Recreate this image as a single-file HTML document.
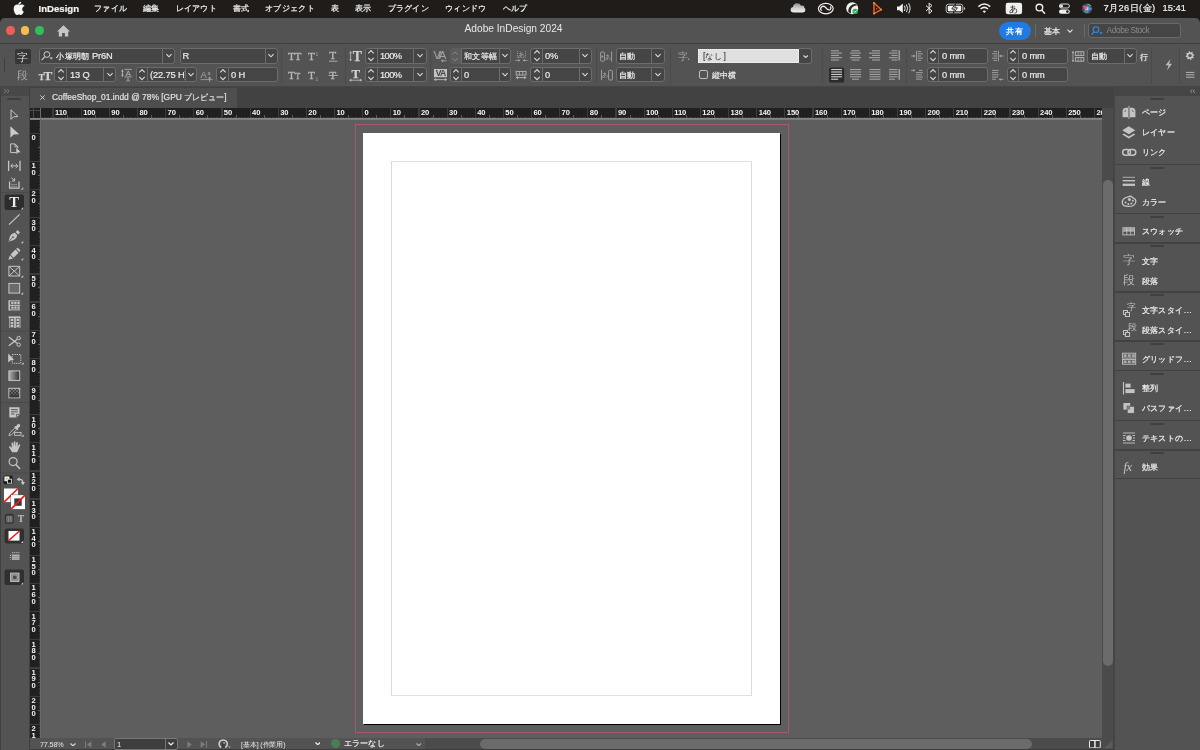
<!DOCTYPE html>
<html lang="ja"><head><meta charset="utf-8"><title>Adobe InDesign 2024</title>
<style>
html,body{margin:0;padding:0}
body{width:1200px;height:750px;overflow:hidden;position:relative;background:#1f1c1a;
 font-family:"Liberation Sans",sans-serif;color:#e6e6e6;font-size:8.4px;line-height:1}
.a,.a *{position:absolute;box-sizing:border-box}
.a svg{overflow:visible}
.mi{top:0;height:17px;line-height:17px;color:#f4f4f4;font-size:8.4px;letter-spacing:.33px;white-space:nowrap;-webkit-text-stroke:0.2px #f4f4f4}
.f{background:#454545;border:1px solid #6c6c6c;border-radius:3px;height:15px;overflow:hidden}
.f .t{top:0;height:13px;line-height:14.6px;font-size:9.3px;letter-spacing:-.15px;color:#ececec;white-space:nowrap;overflow:hidden;-webkit-text-stroke:0.2px #ececec}
.f .d{top:0;width:1px;height:13px;background:#6c6c6c}
.f svg{top:0}
.lb{font-size:8.4px;color:#ececec;white-space:nowrap;line-height:10px;-webkit-text-stroke:0.2px #ececec}
.j{position:static!important;font-size:8.4px;letter-spacing:.25px}
.sep{width:1px;background:#4a4a4a}
.rl{font-size:7.6px;color:#f4f4f4;font-weight:bold;line-height:8px;white-space:nowrap;letter-spacing:-0.1px}
.pl{font-size:8.4px;color:#f0f0f0;white-space:nowrap;line-height:10px;left:26.6px;letter-spacing:.42px;-webkit-text-stroke:0.2px #f0f0f0}
.ps{left:0;width:85px;height:1px;background:#424242}
.pg{left:35px;width:14px;height:2.4px;background:#3f3f3f;border-radius:1px}
</style></head>
<body>
<div id="app" style="position:absolute;left:0;top:0;width:1200px;height:750px;will-change:transform">
<div class="a" style="left:0;top:0;width:1200px;height:18px;background:#1f1c1a">
<svg style="left:14px;top:2px" width="11" height="13" viewBox="0 0 170 200"><path fill="#f5f5f5" d="M150 68c-9 6-23 18-23 42 0 28 24 38 25 38-0 1-4 14-13 27-8 12-17 24-30 24s-17-8-32-8c-15 0-20 8-32 8s-21-11-31-25C3 158-5 130-5 104c0-42 27-64 54-64 14 0 26 9 35 9 8 0 22-10 38-10 6 0 28 1 43 22zM99 28c7-8 11-19 11-30 0-2 0-3-0-4-11 0-24 7-32 16-6 7-12 18-12 30 0 2 0 3 1 4 1 0 2 0 3 0 10 0 22-7 29-16z"/></svg>
<span class="mi" style="left:38.5px;font-weight:bold;font-size:9.6px;letter-spacing:0;">InDesign</span><span class="mi" style="left:94px;">ファイル</span><span class="mi" style="left:143px;">編集</span><span class="mi" style="left:175.5px;">レイアウト</span><span class="mi" style="left:233px;">書式</span><span class="mi" style="left:265px;">オブジェクト</span><span class="mi" style="left:331px;">表</span><span class="mi" style="left:355px;">表示</span><span class="mi" style="left:387.5px;">プラグイン</span><span class="mi" style="left:445px;">ウィンドウ</span><span class="mi" style="left:502.5px;">ヘルプ</span>
<svg class="a" style="left:780px;top:0" width="330" height="18" viewBox="780 0 330 18"><defs><linearGradient id="cl" x1="0" x2="0" y1="0" y2="1"><stop offset="0" stop-color="#8f8f8f"/><stop offset="0.55" stop-color="#cfcfcf"/><stop offset="1" stop-color="#eeeeee"/></linearGradient><radialGradient id="siri" cx="0.5" cy="0.5" r="0.5"><stop offset="0" stop-color="#ffffff"/><stop offset="0.25" stop-color="#7fb4ff"/><stop offset="0.6" stop-color="#5a5a6a"/><stop offset="1" stop-color="#3a3a3a"/></radialGradient></defs><path d="M793.6 12.4 Q790.6 12.4 790.6 9.7 Q790.6 7.4 793 7 Q793.4 3.3 797.2 3.3 Q799.9 3.3 801.1 5.7 Q801.9 5.3 802.7 5.5 Q804.4 5.9 804.4 7.9 Q805.4 8.5 805.4 10 Q805.4 12.4 803 12.4 Z" fill="url(#cl)"/><ellipse cx="825.8" cy="8.6" rx="7.4" ry="5.2" fill="none" stroke="#f0f0f0" stroke-width="1.2"/><path d="M821.6 10.6 Q819.6 8.6 821.8 6.8 Q824 5.4 826 7.8 Q828 10.6 830 9.6 Q831.6 8.4 830.2 6.6" fill="none" stroke="#f0f0f0" stroke-width="1.3"/><circle cx="852.2" cy="8.2" r="6" fill="#f2f2f2"/><path d="M848.4 12.2 Q847.6 7 852.6 4.4 Q856 3.4 857.2 5.4 Q852.6 5.6 851.2 9 Q850.4 11.4 851 13.4 Z" fill="#2a2724"/><circle cx="855.2" cy="11.4" r="2.7" fill="#25b158"/><path d="M853.9 11.4 L854.9 12.4 L856.5 10.4" fill="none" stroke="#fff" stroke-width="0.8"/><path d="M874 3 V13.6 L881.2 9.6 Z" fill="none" stroke="#e9622b" stroke-width="1.5" stroke-linejoin="round"/><circle cx="874" cy="3" r="0.9" fill="#f3a23a"/><circle cx="874" cy="13.6" r="0.9" fill="#f3a23a"/><circle cx="881.2" cy="9.6" r="0.9" fill="#f3a23a"/><circle cx="876.6" cy="8.8" r="0.8" fill="#e9622b"/><path d="M897 6.4 H899.4 L902.8 3.6 V13 L899.4 10.2 H897 Z" fill="#f2f2f2"/><path d="M904.6 6 Q906 8.3 904.6 10.6 M906.6 4.8 Q908.8 8.3 906.6 11.8 M908.8 3.6 Q911.6 8.3 908.8 13" fill="none" stroke="#e8e8e8" stroke-width="1" stroke-linecap="round"/><path d="M926 5.6 L932 11 L929.1 13.6 V3 L932 5.6 L926 11" fill="none" stroke="#f0f0f0" stroke-width="1"/><rect x="946.2" y="4.2" width="16.6" height="8.6" rx="2.2" fill="none" stroke="#bdbdbd" stroke-width="1"/><rect x="947.8" y="5.8" width="13.4" height="5.4" rx="1" fill="#f2f2f2"/><path d="M963.8 7 Q965.2 7.2 965.2 8.5 Q965.2 9.8 963.8 10 Z" fill="#bdbdbd"/><path d="M955.6 3.6 L951.8 9 H954.4 L953.4 13.4 L957.4 7.8 H954.8 Z" fill="#f2f2f2" stroke="#1f1c1a" stroke-width="0.9"/><path d="M978.4 6.6 Q984.3 1.4 990.2 6.6" fill="none" stroke="#f2f2f2" stroke-width="1.5"/><path d="M980.6 9 Q984.3 5.8 988 9" fill="none" stroke="#f2f2f2" stroke-width="1.5"/><path d="M982.6 11.2 Q984.3 9.6 986 11.2 L984.3 13 Z" fill="#f2f2f2"/><rect x="1005.7" y="2.8" width="16.4" height="11.4" rx="2.2" fill="#efefef"/><text x="1013.9" y="11.6" font-size="8.6" text-anchor="middle" fill="#222">あ</text><circle cx="1039.4" cy="7.6" r="3.3" fill="none" stroke="#f0f0f0" stroke-width="1.4"/><path d="M1041.8 10.2 L1044.6 13.2" stroke="#f0f0f0" stroke-width="1.5" stroke-linecap="round"/><rect x="1059.4" y="4" width="10" height="4" rx="2" fill="none" stroke="#f0f0f0" stroke-width="0.9"/><circle cx="1061.5" cy="6" r="1.5" fill="#f0f0f0"/><rect x="1059" y="9.4" width="10.8" height="4.4" rx="2.2" fill="#f0f0f0"/><circle cx="1067.4" cy="11.6" r="1.3" fill="#1f1c1a"/><circle cx="1087" cy="8.6" r="5.3" fill="url(#siri)"/><path d="M1083 6 Q1085 7 1087 8.6" stroke="#ff4d5e" stroke-width="1.4" fill="none"/><path d="M1087.6 4.6 Q1089.4 4.2 1090.6 5.8" stroke="#3ddc84" stroke-width="1.2" fill="none"/><path d="M1088.4 9.4 Q1090.6 9.6 1091.4 8" stroke="#3f8cff" stroke-width="1.6" fill="none"/><path d="M1084 11.4 Q1086 12.6 1088.6 12.2" stroke="#35c6b0" stroke-width="1" fill="none"/></svg>
<span class="mi" style="left:1103.5px;font-size:9.3px;letter-spacing:.4px">7月26日(金)</span><span class="mi" style="left:1162.5px;font-size:9.3px;letter-spacing:.06px">15:41</span>
</div>
<div class="a" style="left:0;top:18px;width:1200px;height:732px;background:#535353;border-radius:5px 5px 0 0"></div>
<div class="a" style="left:0;top:43px;width:1200px;height:1px;background:#3e3e3e"></div>
<div class="a" style="left:6.299999999999999px;top:26.299999999999997px;width:8.8px;height:8.8px;border-radius:50%;background:#ee5f57"></div><div class="a" style="left:20.6px;top:26.299999999999997px;width:8.8px;height:8.8px;border-radius:50%;background:#f4bc4d"></div><div class="a" style="left:34.9px;top:26.299999999999997px;width:8.8px;height:8.8px;border-radius:50%;background:#2fc05c"></div><svg class="a" style="left:56.5px;top:25px" width="13" height="12" viewBox="0 0 13 12"><path fill="#c6c6c6" d="M6.5 0.3 L13 6.4 H11.2 V11.6 H7.9 V8 H5.1 V11.6 H1.8 V6.4 H0 Z"/></svg>
<div class="a" style="left:464.5px;top:22px;height:14px;line-height:14px;font-size:10.2px;color:#e8e8e8;white-space:nowrap">Adobe InDesign 2024</div>
<div class="a" style="left:999px;top:22px;width:32px;height:17.5px;border-radius:9px;background:#1f7be3"></div><div class="a" style="left:1006px;top:26px;font-size:8.4px;letter-spacing:.6px;line-height:10px;font-weight:bold;color:#fff;white-space:nowrap">共有</div>
<div class="a" style="left:1034.5px;top:24px;width:1px;height:13px;background:#6a6a6a"></div><div class="a lb" style="left:1044px;top:26px">基本</div><svg class="a" style="left:1066.5px;top:29px" width="6" height="4" viewBox="0 0 6 4"><path d="M0.5 0.6 L3 3.1 L5.5 0.6" fill="none" stroke="#e0e0e0" stroke-width="1.1"/></svg><div class="a" style="left:1083.5px;top:24px;width:1px;height:13px;background:#6a6a6a"></div>
<div class="a" style="left:1088px;top:23px;width:93px;height:15px;border:1px solid #6a6a6a;border-radius:3px;background:#454545"></div><svg class="a" style="left:1091px;top:25.5px" width="13" height="10" viewBox="0 0 13 10"><circle cx="5" cy="3.6" r="2.9" fill="none" stroke="#2d8cf0" stroke-width="1.1"/><path d="M3 5.8 L0.5 8.8" stroke="#2d8cf0" stroke-width="1.2" fill="none"/><path d="M8.3 6.2 h3.4 l-1.7 2.2z" fill="#2d8cf0"/></svg><div class="a" style="left:1106.5px;top:25px;font-size:8.4px;line-height:11px;color:#8a8a8a;white-space:nowrap;letter-spacing:-0.42px">Adobe Stock</div>
<!-- control panel -->
<div class="a" style="left:4px;top:58px;width:1px;height:14px;background:#3f3f3f"></div><div class="a" style="left:15px;top:48.8px;width:15.5px;height:15.2px;background:#363636;border-radius:2px"></div><div class="a" style="left:17.4px;top:50.8px;font-size:10.6px;line-height:12px;color:#d8d8d8">字</div><div class="a" style="left:17.2px;top:69px;font-size:10.6px;line-height:12px;color:#aaaaaa">段</div>
<div class="a f" style="left:39.2px;top:48.3px;width:136.3px;height:15.4px;"><span class="t" style="left:16.299999999999997px;width:106.0px;height:13.4px;line-height:15.2px"><span class="j">小塚明朝</span> Pr6N</span><i class="d" style="left:122.3px;height:13.4px"></i><svg style="left:125.8px;top:0.20px" width="6" height="13" viewBox="0 0 6 13"><path d="M0.4 5.2 L3 7.8 L5.6 5.2" fill="none" stroke="#e0e0e0" stroke-width="1.1"/></svg></div>
<svg class="a" style="left:40.6px;top:51px" width="13" height="10" viewBox="0 0 13 10"><circle cx="5.9" cy="3.5" r="2.9" fill="none" stroke="#cfcfcf" stroke-width="1"/><path d="M3.9 5.7 L0.6 9.2" stroke="#cfcfcf" stroke-width="1.1" fill="none"/><path d="M8.4 6.4 h3.6 l-1.8 2.2z" fill="#cfcfcf"/></svg>
<div class="a f" style="left:179.5px;top:48.3px;width:98.0px;height:15.4px;"><span class="t" style="left:2.0px;width:82.0px;height:13.4px;line-height:15.2px">R</span><i class="d" style="left:84.0px;height:13.4px"></i><svg style="left:87.5px;top:0.20px" width="6" height="13" viewBox="0 0 6 13"><path d="M0.4 5.2 L3 7.8 L5.6 5.2" fill="none" stroke="#e0e0e0" stroke-width="1.1"/></svg></div>
<div class="a f" style="left:364.5px;top:48.3px;width:62.0px;height:15.4px;"><i class="d" style="left:11.0px;height:13.4px"></i><svg style="left:2.5px;top:0.20px" width="6" height="13" viewBox="0 0 6 13"><path d="M0.3 4.3 L3 1.6 L5.7 4.3 M0.3 8.9 L3 11.6 L5.7 8.9" fill="none" stroke="#dadada" stroke-width="1.1"/></svg><span class="t" style="left:14.5px;width:33.0px;height:13.4px;line-height:15.2px"><span style="position:static;letter-spacing:-.6px">100%</span></span><i class="d" style="left:47.5px;height:13.4px"></i><svg style="left:51.25px;top:0.20px" width="6" height="13" viewBox="0 0 6 13"><path d="M0.4 5.2 L3 7.8 L5.6 5.2" fill="none" stroke="#e0e0e0" stroke-width="1.1"/></svg></div>
<div class="a" style="left:449.5px;top:48.3px;width:11px;height:15.4px;background:#5c5c5c;border-radius:3px 0 0 3px"></div><svg class="a" style="left:452px;top:50px" width="6" height="13" viewBox="0 0 6 13"><path d="M0.5 4.6 L3 2.1 L5.5 4.6 M0.5 8.4 L3 10.9 L5.5 8.4" fill="none" stroke="#8c8c8c" stroke-width="1"/></svg><div class="a f" style="left:460.5px;top:48.3px;width:50.0px;height:15.4px;border-radius:0 3px 3px 0;"><span class="t" style="left:2.5px;width:34.5px;height:13.4px;line-height:15.2px"><span class="j">和文等幅</span></span><i class="d" style="left:37.0px;height:13.4px"></i><svg style="left:40.0px;top:0.20px" width="6" height="13" viewBox="0 0 6 13"><path d="M0.4 5.2 L3 7.8 L5.6 5.2" fill="none" stroke="#e0e0e0" stroke-width="1.1"/></svg></div>
<div class="a f" style="left:530px;top:48.3px;width:61.5px;height:15.4px;"><i class="d" style="left:11px;height:13.4px"></i><svg style="left:2.5px;top:0.20px" width="6" height="13" viewBox="0 0 6 13"><path d="M0.3 4.3 L3 1.6 L5.7 4.3 M0.3 8.9 L3 11.6 L5.7 8.9" fill="none" stroke="#dadada" stroke-width="1.1"/></svg><span class="t" style="left:14px;width:33.5px;height:13.4px;line-height:15.2px">0%</span><i class="d" style="left:47.5px;height:13.4px"></i><svg style="left:51.0px;top:0.20px" width="6" height="13" viewBox="0 0 6 13"><path d="M0.4 5.2 L3 7.8 L5.6 5.2" fill="none" stroke="#e0e0e0" stroke-width="1.1"/></svg></div>
<div class="a f" style="left:615.5px;top:48.3px;width:49.0px;height:15.4px;"><span class="t" style="left:2.5px;width:32.0px;height:13.4px;line-height:15.2px"><span class="j" style="letter-spacing:0">自動</span></span><i class="d" style="left:34.5px;height:13.4px"></i><svg style="left:38.25px;top:0.20px" width="6" height="13" viewBox="0 0 6 13"><path d="M0.4 5.2 L3 7.8 L5.6 5.2" fill="none" stroke="#e0e0e0" stroke-width="1.1"/></svg></div>
<div class="a" style="left:698px;top:48.8px;width:101px;height:14.4px;background:#e0e0e0;border:1px dotted #f6f6f6"></div><div class="a" style="left:703px;top:50.5px;font-size:8.6px;line-height:11px;color:#1a1a1a;white-space:nowrap">[<span class="j" style="letter-spacing:1px">なし</span>]</div><div class="a" style="left:798.5px;top:48.3px;width:13.5px;height:15.4px;background:#454545;border:1px solid #6c6c6c;border-left:none;border-radius:0 3px 3px 0"></div><svg class="a" style="left:802.5px;top:55px" width="5.5" height="3" viewBox="0 0 5.5 3"><path d="M0.5 0.5 L2.75 2.5 L5.0 0.5" fill="none" stroke="#dcdcdc" stroke-width="1.1"/></svg><div class="a f" style="left:926.5px;top:48.3px;width:61.0px;height:15.4px;"><i class="d" style="left:10.5px;height:13.4px"></i><svg style="left:2.25px;top:0.20px" width="6" height="13" viewBox="0 0 6 13"><path d="M0.3 4.3 L3 1.6 L5.7 4.3 M0.3 8.9 L3 11.6 L5.7 8.9" fill="none" stroke="#dadada" stroke-width="1.1"/></svg><span class="t" style="left:14.5px;width:44.5px;height:13.4px;line-height:15.2px">0 mm</span></div>
<div class="a f" style="left:1006.5px;top:48.3px;width:61.5px;height:15.4px;"><i class="d" style="left:10.5px;height:13.4px"></i><svg style="left:2.25px;top:0.20px" width="6" height="13" viewBox="0 0 6 13"><path d="M0.3 4.3 L3 1.6 L5.7 4.3 M0.3 8.9 L3 11.6 L5.7 8.9" fill="none" stroke="#dadada" stroke-width="1.1"/></svg><span class="t" style="left:14.5px;width:45.0px;height:13.4px;line-height:15.2px">0 mm</span></div>
<div class="a f" style="left:1087px;top:48.3px;width:49.5px;height:15.4px;"><span class="t" style="left:3px;width:33px;height:13.4px;line-height:15.2px"><span class="j" style="letter-spacing:0">自動</span></span><i class="d" style="left:36px;height:13.4px"></i><svg style="left:39.25px;top:0.20px" width="6" height="13" viewBox="0 0 6 13"><path d="M0.4 5.2 L3 7.8 L5.6 5.2" fill="none" stroke="#e0e0e0" stroke-width="1.1"/></svg></div>
<div class="a lb" style="left:1139.5px;top:51.5px">行</div>
<div class="a f" style="left:54.3px;top:67.3px;width:62.2px;height:14.4px;"><i class="d" style="left:10.700000000000003px;height:12.4px"></i><svg style="left:2.35px;top:-0.30px" width="6" height="13" viewBox="0 0 6 13"><path d="M0.3 4.3 L3 1.6 L5.7 4.3 M0.3 8.9 L3 11.6 L5.7 8.9" fill="none" stroke="#dadada" stroke-width="1.1"/></svg><span class="t" style="left:14.700000000000003px;width:33.5px;height:12.4px;line-height:14.6px">13 Q</span><i class="d" style="left:48.2px;height:12.4px"></i><svg style="left:51.7px;top:-0.30px" width="6" height="13" viewBox="0 0 6 13"><path d="M0.4 5.2 L3 7.8 L5.6 5.2" fill="none" stroke="#e0e0e0" stroke-width="1.1"/></svg></div>
<div class="a f" style="left:135.5px;top:67.3px;width:61.0px;height:14.4px;"><i class="d" style="left:10.5px;height:12.4px"></i><svg style="left:2.25px;top:-0.30px" width="6" height="13" viewBox="0 0 6 13"><path d="M0.3 4.3 L3 1.6 L5.7 4.3 M0.3 8.9 L3 11.6 L5.7 8.9" fill="none" stroke="#dadada" stroke-width="1.1"/></svg><span class="t" style="left:13.5px;width:34.5px;height:12.4px;line-height:14.6px">(22.75 H)</span><i class="d" style="left:48.0px;height:12.4px"></i><svg style="left:51.0px;top:-0.30px" width="6" height="13" viewBox="0 0 6 13"><path d="M0.4 5.2 L3 7.8 L5.6 5.2" fill="none" stroke="#e0e0e0" stroke-width="1.1"/></svg></div>
<div class="a f" style="left:216px;top:67.3px;width:61.5px;height:14.4px;"><i class="d" style="left:11px;height:12.4px"></i><svg style="left:2.5px;top:-0.30px" width="6" height="13" viewBox="0 0 6 13"><path d="M0.3 4.3 L3 1.6 L5.7 4.3 M0.3 8.9 L3 11.6 L5.7 8.9" fill="none" stroke="#dadada" stroke-width="1.1"/></svg><span class="t" style="left:14px;width:45.5px;height:12.4px;line-height:14.6px">0 H</span></div>
<div class="a f" style="left:364.5px;top:67.3px;width:62.0px;height:14.4px;"><i class="d" style="left:11.0px;height:12.4px"></i><svg style="left:2.5px;top:-0.30px" width="6" height="13" viewBox="0 0 6 13"><path d="M0.3 4.3 L3 1.6 L5.7 4.3 M0.3 8.9 L3 11.6 L5.7 8.9" fill="none" stroke="#dadada" stroke-width="1.1"/></svg><span class="t" style="left:14.5px;width:33.0px;height:12.4px;line-height:14.6px"><span style="position:static;letter-spacing:-.6px">100%</span></span><i class="d" style="left:47.5px;height:12.4px"></i><svg style="left:51.25px;top:-0.30px" width="6" height="13" viewBox="0 0 6 13"><path d="M0.4 5.2 L3 7.8 L5.6 5.2" fill="none" stroke="#e0e0e0" stroke-width="1.1"/></svg></div>
<div class="a f" style="left:449.5px;top:67.3px;width:61.0px;height:14.4px;"><i class="d" style="left:10.0px;height:12.4px"></i><svg style="left:2.0px;top:-0.30px" width="6" height="13" viewBox="0 0 6 13"><path d="M0.3 4.3 L3 1.6 L5.7 4.3 M0.3 8.9 L3 11.6 L5.7 8.9" fill="none" stroke="#dadada" stroke-width="1.1"/></svg><span class="t" style="left:13.5px;width:34.5px;height:12.4px;line-height:14.6px">0</span><i class="d" style="left:48.0px;height:12.4px"></i><svg style="left:51.0px;top:-0.30px" width="6" height="13" viewBox="0 0 6 13"><path d="M0.4 5.2 L3 7.8 L5.6 5.2" fill="none" stroke="#e0e0e0" stroke-width="1.1"/></svg></div>
<div class="a f" style="left:530px;top:67.3px;width:61.5px;height:14.4px;"><i class="d" style="left:11px;height:12.4px"></i><svg style="left:2.5px;top:-0.30px" width="6" height="13" viewBox="0 0 6 13"><path d="M0.3 4.3 L3 1.6 L5.7 4.3 M0.3 8.9 L3 11.6 L5.7 8.9" fill="none" stroke="#dadada" stroke-width="1.1"/></svg><span class="t" style="left:14px;width:33.5px;height:12.4px;line-height:14.6px">0</span><i class="d" style="left:47.5px;height:12.4px"></i><svg style="left:51.0px;top:-0.30px" width="6" height="13" viewBox="0 0 6 13"><path d="M0.4 5.2 L3 7.8 L5.6 5.2" fill="none" stroke="#e0e0e0" stroke-width="1.1"/></svg></div>
<div class="a f" style="left:615.5px;top:67.3px;width:49.0px;height:14.4px;"><span class="t" style="left:2.5px;width:32.0px;height:12.4px;line-height:14.6px"><span class="j" style="letter-spacing:0">自動</span></span><i class="d" style="left:34.5px;height:12.4px"></i><svg style="left:38.25px;top:-0.30px" width="6" height="13" viewBox="0 0 6 13"><path d="M0.4 5.2 L3 7.8 L5.6 5.2" fill="none" stroke="#e0e0e0" stroke-width="1.1"/></svg></div>
<div class="a" style="left:699px;top:70px;width:8.5px;height:8.5px;border:1px solid #bdbdbd;border-radius:2px"></div><div class="a lb" style="left:712px;top:69.5px">縦中横</div>
<div class="a f" style="left:926.5px;top:67.3px;width:61.0px;height:14.4px;"><i class="d" style="left:10.5px;height:12.4px"></i><svg style="left:2.25px;top:-0.30px" width="6" height="13" viewBox="0 0 6 13"><path d="M0.3 4.3 L3 1.6 L5.7 4.3 M0.3 8.9 L3 11.6 L5.7 8.9" fill="none" stroke="#dadada" stroke-width="1.1"/></svg><span class="t" style="left:14.5px;width:44.5px;height:12.4px;line-height:14.6px">0 mm</span></div>
<div class="a f" style="left:1006.5px;top:67.3px;width:61.5px;height:14.4px;"><i class="d" style="left:10.5px;height:12.4px"></i><svg style="left:2.25px;top:-0.30px" width="6" height="13" viewBox="0 0 6 13"><path d="M0.3 4.3 L3 1.6 L5.7 4.3 M0.3 8.9 L3 11.6 L5.7 8.9" fill="none" stroke="#dadada" stroke-width="1.1"/></svg><span class="t" style="left:14.5px;width:45.0px;height:12.4px;line-height:14.6px">0 mm</span></div>
<div class="a sep" style="left:281px;top:47px;height:37px"></div><div class="a sep" style="left:345px;top:47px;height:37px"></div><div class="a sep" style="left:430px;top:47px;height:37px"></div><div class="a sep" style="left:595.5px;top:47px;height:37px"></div><div class="a sep" style="left:669.5px;top:47px;height:37px"></div><div class="a sep" style="left:822px;top:47px;height:37px"></div><div class="a sep" style="left:906px;top:47px;height:37px"></div><div class="a sep" style="left:1151px;top:47px;height:37px"></div><div class="a sep" style="left:1179px;top:47px;height:37px"></div>
<svg class="a" style="left:0;top:44px" width="1200" height="43" viewBox="0 44 1200 43"><text x="38.8" y="80.2" font-family="Liberation Serif,serif" font-size="8.6" font-weight="bold" text-anchor="start" fill="#d2d2d2" stroke="#d2d2d2" stroke-width="0.25">T</text><text x="43.6" y="80.2" font-family="Liberation Serif,serif" font-size="13.2" font-weight="bold" text-anchor="start" fill="#d2d2d2" stroke="#d2d2d2" stroke-width="0.25">T</text><path d="M122.4 69.6 V76.6" stroke="#b8b8b8" stroke-width="0.9" fill="none"/><path d="M121.0 71.4 L122.4 69.39999999999999 L123.80000000000001 71.4 Z M121.0 74.79999999999998 L122.4 76.8 L123.80000000000001 74.79999999999998 Z" fill="#b8b8b8"/><path d="M124.6 69.4 H131.6 M124.6 76.9 H131.6" stroke="#b8b8b8" stroke-width="0.8"/><text x="128.1" y="76.3" font-family="Liberation Sans,sans-serif" font-size="8" text-anchor="middle" fill="#b8b8b8">A</text><text x="128.1" y="81.6" font-family="Liberation Sans,sans-serif" font-size="5.6" text-anchor="middle" fill="#b8b8b8">A</text><text x="200.6" y="78" font-family="Liberation Sans,sans-serif" font-size="9.4" fill="#a6a6a6">A</text><path d="M200.6 79.6 H212.6" stroke="#a6a6a6" stroke-width="0.8"/><text x="207.4" y="75" font-family="Liberation Sans,sans-serif" font-size="5.4" fill="#a6a6a6">a</text><path d="M209.6 77 V81.8" stroke="#a6a6a6" stroke-width="0.9"/><path d="M208 78.4 L209.6 76.4 L211.2 78.4 Z" fill="#a6a6a6"/><text x="288" y="59.6" font-family="Liberation Serif,serif" font-size="11.4" font-weight="normal" text-anchor="start" fill="#b8b8b8" stroke="#b8b8b8" stroke-width="0.3">T</text><text x="294.6" y="59.6" font-family="Liberation Serif,serif" font-size="11.4" font-weight="normal" text-anchor="start" fill="#b8b8b8" stroke="#b8b8b8" stroke-width="0.3">T</text><text x="308" y="59.6" font-family="Liberation Serif,serif" font-size="11.4" font-weight="normal" text-anchor="start" fill="#b8b8b8" stroke="#b8b8b8" stroke-width="0.3">T</text><text x="315.6" y="55.8" font-family="Liberation Serif,serif" font-size="5.6" fill="#b8b8b8">1</text><text x="329.2" y="59.4" font-family="Liberation Serif,serif" font-size="11.4" font-weight="normal" text-anchor="start" fill="#b8b8b8" stroke="#b8b8b8" stroke-width="0.3">T</text><path d="M329 61.2 H337.4" stroke="#b8b8b8" stroke-width="0.9"/><text x="288" y="79" font-family="Liberation Serif,serif" font-size="11.4" font-weight="normal" text-anchor="start" fill="#b8b8b8" stroke="#b8b8b8" stroke-width="0.3">T</text><text x="295.2" y="79" font-family="Liberation Serif,serif" font-size="8.2" font-weight="normal" text-anchor="start" fill="#b8b8b8" stroke="#b8b8b8" stroke-width="0.3">T</text><text x="308" y="78.6" font-family="Liberation Serif,serif" font-size="11.4" font-weight="normal" text-anchor="start" fill="#b8b8b8" stroke="#b8b8b8" stroke-width="0.3">T</text><text x="315.4" y="80.6" font-family="Liberation Serif,serif" font-size="5.6" fill="#b8b8b8">1</text><text x="329.2" y="79" font-family="Liberation Serif,serif" font-size="11.4" font-weight="normal" text-anchor="start" fill="#b8b8b8" stroke="#b8b8b8" stroke-width="0.3">T</text><path d="M328.6 75.4 H338" stroke="#b8b8b8" stroke-width="0.9"/><path d="M350.6 51.4 V61" stroke="#b8b8b8" stroke-width="0.9" fill="none"/><path d="M349.20000000000005 53.199999999999996 L350.6 51.199999999999996 L352.0 53.199999999999996 Z M349.20000000000005 59.2 L350.6 61.2 L352.0 59.2 Z" fill="#b8b8b8"/><text x="352.8" y="61" font-family="Liberation Serif,serif" font-size="13.6" font-weight="bold" text-anchor="start" fill="#d2d2d2" stroke="#d2d2d2" stroke-width="0.25">T</text><text x="351.4" y="78" font-family="Liberation Serif,serif" font-size="12.8" font-weight="bold" text-anchor="start" fill="#d2d2d2" stroke="#d2d2d2" stroke-width="0.25">T</text><path d="M349.4 80.2 H361.8" stroke="#b8b8b8" stroke-width="0.9" fill="none"/><path d="M351.4 78.60000000000001 L349.2 80.2 L351.4 81.8 Z" fill="#b8b8b8"/><path d="M359.8 78.60000000000001 L362.0 80.2 L359.8 81.8 Z" fill="#b8b8b8"/><text x="433.4" y="59" font-family="Liberation Sans,sans-serif" font-size="10.8" fill="#a6a6a6" letter-spacing="-2.3">V/A</text><path d="M441.2 60.8 H446.6" stroke="#a6a6a6" stroke-width="0.9" fill="none"/><path d="M443.09999999999997 59.3 L441.0 60.8 L443.09999999999997 62.3 Z" fill="#a6a6a6"/><rect x="434" y="69" width="13" height="8.2" fill="#c2c2c2"/><text x="440.5" y="76.4" font-family="Liberation Sans,sans-serif" font-size="8.6" font-weight="bold" text-anchor="middle" fill="#444" letter-spacing="-1">VA</text><path d="M434.2 79.6 H446.8" stroke="#b8b8b8" stroke-width="0.9" fill="none"/><path d="M436.2 78.0 L434.0 79.6 L436.2 81.19999999999999 Z" fill="#b8b8b8"/><path d="M444.8 78.0 L447.0 79.6 L444.8 81.19999999999999 Z" fill="#b8b8b8"/><path d="M517.5 51 V58.2 M525.6 51 V58.2" stroke="#a6a6a6" stroke-width="0.7" stroke-dasharray="1.2 0.7"/><text x="521.6" y="57.4" font-size="6.6" text-anchor="middle" fill="#a6a6a6">あ</text><path d="M515.4 60.4 H520" stroke="#a6a6a6" stroke-width="0.8" fill="none"/><path d="M518.2 59.0 L520.2 60.4 L518.2 61.8 Z" fill="#a6a6a6"/><path d="M523 60.4 H527.6" stroke="#a6a6a6" stroke-width="0.8" fill="none"/><path d="M524.8 59.0 L522.8 60.4 L524.8 61.8 Z" fill="#a6a6a6"/><rect x="516.2" y="71.4" width="9.8" height="3.6" fill="none" stroke="#b8b8b8" stroke-width="0.9"/><path d="M519.4 71.4 V75 M522.8 71.4 V75" stroke="#b8b8b8" stroke-width="0.8"/><path d="M516 77.6 H526.2" stroke="#b8b8b8" stroke-width="0.9" fill="none"/><path d="M518.0 76.0 L515.8 77.6 L518.0 79.19999999999999 Z" fill="#b8b8b8"/><path d="M524.2 76.0 L526.4000000000001 77.6 L524.2 79.19999999999999 Z" fill="#b8b8b8"/><rect x="600.6" y="52" width="3.8" height="9.2" rx="0.8" fill="none" stroke="#a6a6a6" stroke-width="0.9"/><path d="M601.6 55.2 L603.6 56.6 L601.6 58 Z" fill="#a6a6a6"/><text x="607.9" y="58.6" font-size="5.6" text-anchor="middle" fill="#a6a6a6">あ</text><path d="M611.6 51.4 V61.6" stroke="#a6a6a6" stroke-width="0.9"/><path d="M601.5 69.8 V80.2" stroke="#a6a6a6" stroke-width="0.9"/><text x="605.3" y="77" font-size="5.6" text-anchor="middle" fill="#a6a6a6">あ</text><rect x="608.6" y="70.4" width="3.8" height="9.6" rx="0.8" fill="none" stroke="#a6a6a6" stroke-width="0.9"/><text x="678" y="60" font-size="10.4" fill="#a8a8a8">字</text><rect x="688" y="58.6" width="1.3" height="1.3" fill="#a8a8a8"/><path d="M831 50.8 h8" stroke="#aaaaaa" stroke-width="1.0"/><path d="M831 53.1 h11" stroke="#aaaaaa" stroke-width="1.0"/><path d="M831 55.4 h8" stroke="#aaaaaa" stroke-width="1.0"/><path d="M831 57.7 h11" stroke="#aaaaaa" stroke-width="1.0"/><path d="M831 60 h8" stroke="#aaaaaa" stroke-width="1.0"/><path d="M851.5 50.8 h8" stroke="#aaaaaa" stroke-width="1.0"/><path d="M850 53.1 h11" stroke="#aaaaaa" stroke-width="1.0"/><path d="M851.5 55.4 h8" stroke="#aaaaaa" stroke-width="1.0"/><path d="M850 57.7 h11" stroke="#aaaaaa" stroke-width="1.0"/><path d="M851.5 60 h8" stroke="#aaaaaa" stroke-width="1.0"/><path d="M872 50.8 h8" stroke="#aaaaaa" stroke-width="1.0"/><path d="M869 53.1 h11" stroke="#aaaaaa" stroke-width="1.0"/><path d="M872 55.4 h8" stroke="#aaaaaa" stroke-width="1.0"/><path d="M869 57.7 h11" stroke="#aaaaaa" stroke-width="1.0"/><path d="M872 60 h8" stroke="#aaaaaa" stroke-width="1.0"/><path d="M891.5 50.8 h6" stroke="#aaaaaa" stroke-width="1.0"/><path d="M889 53.1 h8.5" stroke="#aaaaaa" stroke-width="1.0"/><path d="M891.5 55.4 h6" stroke="#aaaaaa" stroke-width="1.0"/><path d="M889 57.7 h8.5" stroke="#aaaaaa" stroke-width="1.0"/><path d="M891.5 60 h6" stroke="#aaaaaa" stroke-width="1.0"/><path d="M899.2 50.2 V60.6" stroke="#aaaaaa" stroke-width="1.3"/><rect x="829" y="67.4" width="15.2" height="15.2" rx="1.5" fill="#2b2b2b"/><path d="M831.2 69.6 h10.8" stroke="#e4e4e4" stroke-width="1.0"/><path d="M831.2 72 h10.8" stroke="#e4e4e4" stroke-width="1.0"/><path d="M831.2 74.4 h10.8" stroke="#e4e4e4" stroke-width="1.0"/><path d="M831.2 76.8 h10.8" stroke="#e4e4e4" stroke-width="1.0"/><path d="M831.2 79.2 h7" stroke="#e4e4e4" stroke-width="1.0"/><path d="M850 69.6 h11" stroke="#aaaaaa" stroke-width="1.0"/><path d="M850 72 h11" stroke="#aaaaaa" stroke-width="1.0"/><path d="M850 74.4 h11" stroke="#aaaaaa" stroke-width="1.0"/><path d="M850 76.8 h11" stroke="#aaaaaa" stroke-width="1.0"/><path d="M852 79.2 h7" stroke="#aaaaaa" stroke-width="1.0"/><path d="M869.5 69.6 h11" stroke="#aaaaaa" stroke-width="1.0"/><path d="M869.5 72 h11" stroke="#aaaaaa" stroke-width="1.0"/><path d="M869.5 74.4 h11" stroke="#aaaaaa" stroke-width="1.0"/><path d="M869.5 76.8 h11" stroke="#aaaaaa" stroke-width="1.0"/><path d="M869.5 79.2 h11" stroke="#aaaaaa" stroke-width="1.0"/><path d="M889 69.6 h8.5" stroke="#aaaaaa" stroke-width="1.0"/><path d="M889 72 h8.5" stroke="#aaaaaa" stroke-width="1.0"/><path d="M889 74.4 h8.5" stroke="#aaaaaa" stroke-width="1.0"/><path d="M889 76.8 h8.5" stroke="#aaaaaa" stroke-width="1.0"/><path d="M889 79.2 h6" stroke="#aaaaaa" stroke-width="1.0"/><path d="M899.2 69 V79.8" stroke="#aaaaaa" stroke-width="1.3"/><path d="M911 56 H915" stroke="#a8a8a8" stroke-width="0.8" fill="none"/><path d="M913.2 54.6 L915.2 56 L913.2 57.4 Z" fill="#a8a8a8"/><path d="M916.6 50.8 V61.2" stroke="#a8a8a8" stroke-width="0.9"/><path d="M917.8 51.6 h3.4" stroke="#a8a8a8" stroke-width="0.9"/><path d="M917.8 53.8 h5" stroke="#a8a8a8" stroke-width="0.9"/><path d="M917.8 56 h3.4" stroke="#a8a8a8" stroke-width="0.9"/><path d="M917.8 58.2 h5" stroke="#a8a8a8" stroke-width="0.9"/><path d="M917.8 60.4 h3.4" stroke="#a8a8a8" stroke-width="0.9"/><path d="M911 70.4 H915" stroke="#a8a8a8" stroke-width="0.8" fill="none"/><path d="M913.2 69.0 L915.2 70.4 L913.2 71.80000000000001 Z" fill="#a8a8a8"/><path d="M919 70.4 h3.6" stroke="#a8a8a8" stroke-width="0.9"/><path d="M916 72.6 h6.8" stroke="#a8a8a8" stroke-width="0.9"/><path d="M916 74.8 h6" stroke="#a8a8a8" stroke-width="0.9"/><path d="M916 77 h6.8" stroke="#a8a8a8" stroke-width="0.9"/><path d="M916 79.2 h6" stroke="#a8a8a8" stroke-width="0.9"/><path d="M993.6 51.6 h3.4" stroke="#a8a8a8" stroke-width="0.9"/><path d="M992 53.8 h5" stroke="#a8a8a8" stroke-width="0.9"/><path d="M993.6 56 h3.4" stroke="#a8a8a8" stroke-width="0.9"/><path d="M992 58.2 h5" stroke="#a8a8a8" stroke-width="0.9"/><path d="M993.6 60.4 h3.4" stroke="#a8a8a8" stroke-width="0.9"/><path d="M998.4 50.8 V61.2" stroke="#a8a8a8" stroke-width="0.9"/><path d="M999.6 56 H1003.6" stroke="#a8a8a8" stroke-width="0.8" fill="none"/><path d="M1001.4 54.6 L999.4 56 L1001.4 57.4 Z" fill="#a8a8a8"/><path d="M992 70.4 h6.8" stroke="#a8a8a8" stroke-width="0.9"/><path d="M992 72.6 h6" stroke="#a8a8a8" stroke-width="0.9"/><path d="M992 74.8 h6.8" stroke="#a8a8a8" stroke-width="0.9"/><path d="M992 77 h6" stroke="#a8a8a8" stroke-width="0.9"/><path d="M992 79.2 h4" stroke="#a8a8a8" stroke-width="0.9"/><path d="M999 79.4 H1003.4" stroke="#a8a8a8" stroke-width="0.8" fill="none"/><path d="M1000.8 78.0 L998.8 79.4 L1000.8 80.80000000000001 Z" fill="#a8a8a8"/><path d="M1073 51.4 V61.8" stroke="#b8b8b8" stroke-width="0.8" fill="none"/><path d="M1071.8 53.0 L1073 51.199999999999996 L1074.2 53.0 Z M1071.8 60.199999999999996 L1073 62.0 L1074.2 60.199999999999996 Z" fill="#b8b8b8"/><rect x="1075.4" y="51.8" width="8.4" height="3.6" fill="none" stroke="#b8b8b8" stroke-width="0.9"/><path d="M1078.2 51.8 v3.6 M1081 51.8 v3.6" stroke="#b8b8b8" stroke-width="0.7"/><rect x="1075.4" y="57.6" width="8.4" height="3.6" fill="none" stroke="#b8b8b8" stroke-width="0.9"/><path d="M1078.2 57.6 v3.6 M1081 57.6 v3.6" stroke="#b8b8b8" stroke-width="0.7"/><path d="M1170.4 59 L1165.6 65.2 H1168.6 L1167 70.4 L1172 63.8 H1169 Z" fill="#bdbdbd"/><path d="M1194.09 54.26 L1194.29 55.27 L1193.19 55.84 L1193.04 56.60 L1193.84 57.54 L1193.26 58.40 L1192.08 58.03 L1191.45 58.45 L1191.34 59.69 L1190.33 59.89 L1189.76 58.79 L1189.00 58.64 L1188.06 59.44 L1187.20 58.86 L1187.57 57.68 L1187.15 57.05 L1185.91 56.94 L1185.71 55.93 L1186.81 55.36 L1186.96 54.60 L1186.16 53.66 L1186.74 52.80 L1187.92 53.17 L1188.55 52.75 L1188.66 51.51 L1189.67 51.31 L1190.24 52.41 L1191.00 52.56 L1191.94 51.76 L1192.80 52.34 L1192.43 53.52 L1192.85 54.15 Z" fill="#c8c8c8"/><circle cx="1190" cy="55.6" r="1.7" fill="#535353"/><path d="M1186 72.4 H1194.4 M1186 74.8 H1194.4 M1186 77.2 H1194.4" stroke="#c0c0c0" stroke-width="0.9"/></svg>
<div class="a" style="left:0;top:86px;width:1200px;height:1px;background:#464646"></div>
<div class="a" style="left:29px;top:87px;width:1086px;height:21px;background:#424242"></div>
<div class="a" style="left:30px;top:88px;width:207px;height:20px;background:#4e4e4e"></div><svg class="a" style="left:40px;top:95px" width="5" height="5" viewBox="0 0 5 5"><path d="M0.4 0.4 L4.6 4.6 M4.6 0.4 L0.4 4.6" stroke="#dcdcdc" stroke-width="0.9" fill="none"/></svg><div class="a" style="left:52px;top:92.3px;font-size:8.45px;line-height:11px;color:#e6e6e6;white-space:nowrap;-webkit-text-stroke:0.15px #e6e6e6">CoffeeShop_01.indd @ 78% [GPU プレビュー]</div>
<div class="a" style="left:30px;top:108px;width:1072px;height:630px;background:#5e5e5e"></div>
<div class="a" style="left:354.5px;top:123.8px;width:434.3px;height:609.2px;border:1.2px solid #a8586b"></div>
<div class="a" style="left:364.3px;top:134.2px;width:416.9px;height:591px;background:#000"></div><div class="a" style="left:363.2px;top:133px;width:416.8px;height:590.8px;background:#fff"></div>
<div class="a" style="left:391px;top:161px;width:361px;height:535px;border-style:solid;border-width:1px;border-color:#f3d4ea #d6d6ff #f3d4ea #d6d6ff"></div>
<div class="a" style="left:30px;top:108px;width:1072px;height:12px;overflow:hidden">
<div style="left:0;top:0;width:1072px;height:9.8px;background:#202020"></div><div style="left:0;top:9.8px;width:1072px;height:1.8px;background:linear-gradient(180deg,#8c8e8e,#747676)"></div><div style="left:0;top:8.6px;width:1072px;height:1.2px;background:repeating-linear-gradient(90deg,#555 0,#555 1px,transparent 1px,transparent 2.8146px);background-position:0.5771999999999897px 0"></div><i style="left:22.49px;top:0;width:1.2px;height:9.8px;background:#3d3d3d"></i><i style="left:36.67px;top:7px;width:1px;height:2.8px;background:#5c5c5c"></i><span class="rl" style="left:24.99px;top:1.3px">110</span><i style="left:50.64px;top:0;width:1.2px;height:9.8px;background:#3d3d3d"></i><i style="left:64.81px;top:7px;width:1px;height:2.8px;background:#5c5c5c"></i><span class="rl" style="left:53.14px;top:1.3px">100</span><i style="left:78.79px;top:0;width:1.2px;height:9.8px;background:#3d3d3d"></i><i style="left:92.96px;top:7px;width:1px;height:2.8px;background:#5c5c5c"></i><span class="rl" style="left:81.29px;top:1.3px">90</span><i style="left:106.93px;top:0;width:1.2px;height:9.8px;background:#3d3d3d"></i><i style="left:121.10px;top:7px;width:1px;height:2.8px;background:#5c5c5c"></i><span class="rl" style="left:109.43px;top:1.3px">80</span><i style="left:135.08px;top:0;width:1.2px;height:9.8px;background:#3d3d3d"></i><i style="left:149.25px;top:7px;width:1px;height:2.8px;background:#5c5c5c"></i><span class="rl" style="left:137.58px;top:1.3px">70</span><i style="left:163.22px;top:0;width:1.2px;height:9.8px;background:#3d3d3d"></i><i style="left:177.40px;top:7px;width:1px;height:2.8px;background:#5c5c5c"></i><span class="rl" style="left:165.72px;top:1.3px">60</span><i style="left:191.37px;top:0;width:1.2px;height:9.8px;background:#3d3d3d"></i><i style="left:205.54px;top:7px;width:1px;height:2.8px;background:#5c5c5c"></i><span class="rl" style="left:193.87px;top:1.3px">50</span><i style="left:219.52px;top:0;width:1.2px;height:9.8px;background:#3d3d3d"></i><i style="left:233.69px;top:7px;width:1px;height:2.8px;background:#5c5c5c"></i><span class="rl" style="left:222.02px;top:1.3px">40</span><i style="left:247.66px;top:0;width:1.2px;height:9.8px;background:#3d3d3d"></i><i style="left:261.83px;top:7px;width:1px;height:2.8px;background:#5c5c5c"></i><span class="rl" style="left:250.16px;top:1.3px">30</span><i style="left:275.81px;top:0;width:1.2px;height:9.8px;background:#3d3d3d"></i><i style="left:289.98px;top:7px;width:1px;height:2.8px;background:#5c5c5c"></i><span class="rl" style="left:278.31px;top:1.3px">20</span><i style="left:303.95px;top:0;width:1.2px;height:9.8px;background:#3d3d3d"></i><i style="left:318.13px;top:7px;width:1px;height:2.8px;background:#5c5c5c"></i><span class="rl" style="left:306.45px;top:1.3px">10</span><i style="left:332.10px;top:0;width:1.2px;height:9.8px;background:#3d3d3d"></i><i style="left:346.27px;top:7px;width:1px;height:2.8px;background:#5c5c5c"></i><span class="rl" style="left:334.60px;top:1.3px">0</span><i style="left:360.25px;top:0;width:1.2px;height:9.8px;background:#3d3d3d"></i><i style="left:374.42px;top:7px;width:1px;height:2.8px;background:#5c5c5c"></i><span class="rl" style="left:362.75px;top:1.3px">10</span><i style="left:388.39px;top:0;width:1.2px;height:9.8px;background:#3d3d3d"></i><i style="left:402.56px;top:7px;width:1px;height:2.8px;background:#5c5c5c"></i><span class="rl" style="left:390.89px;top:1.3px">20</span><i style="left:416.54px;top:0;width:1.2px;height:9.8px;background:#3d3d3d"></i><i style="left:430.71px;top:7px;width:1px;height:2.8px;background:#5c5c5c"></i><span class="rl" style="left:419.04px;top:1.3px">30</span><i style="left:444.68px;top:0;width:1.2px;height:9.8px;background:#3d3d3d"></i><i style="left:458.86px;top:7px;width:1px;height:2.8px;background:#5c5c5c"></i><span class="rl" style="left:447.18px;top:1.3px">40</span><i style="left:472.83px;top:0;width:1.2px;height:9.8px;background:#3d3d3d"></i><i style="left:487.00px;top:7px;width:1px;height:2.8px;background:#5c5c5c"></i><span class="rl" style="left:475.33px;top:1.3px">50</span><i style="left:500.98px;top:0;width:1.2px;height:9.8px;background:#3d3d3d"></i><i style="left:515.15px;top:7px;width:1px;height:2.8px;background:#5c5c5c"></i><span class="rl" style="left:503.48px;top:1.3px">60</span><i style="left:529.12px;top:0;width:1.2px;height:9.8px;background:#3d3d3d"></i><i style="left:543.29px;top:7px;width:1px;height:2.8px;background:#5c5c5c"></i><span class="rl" style="left:531.62px;top:1.3px">70</span><i style="left:557.27px;top:0;width:1.2px;height:9.8px;background:#3d3d3d"></i><i style="left:571.44px;top:7px;width:1px;height:2.8px;background:#5c5c5c"></i><span class="rl" style="left:559.77px;top:1.3px">80</span><i style="left:585.41px;top:0;width:1.2px;height:9.8px;background:#3d3d3d"></i><i style="left:599.59px;top:7px;width:1px;height:2.8px;background:#5c5c5c"></i><span class="rl" style="left:587.91px;top:1.3px">90</span><i style="left:613.56px;top:0;width:1.2px;height:9.8px;background:#3d3d3d"></i><i style="left:627.73px;top:7px;width:1px;height:2.8px;background:#5c5c5c"></i><span class="rl" style="left:616.06px;top:1.3px">100</span><i style="left:641.71px;top:0;width:1.2px;height:9.8px;background:#3d3d3d"></i><i style="left:655.88px;top:7px;width:1px;height:2.8px;background:#5c5c5c"></i><span class="rl" style="left:644.21px;top:1.3px">110</span><i style="left:669.85px;top:0;width:1.2px;height:9.8px;background:#3d3d3d"></i><i style="left:684.02px;top:7px;width:1px;height:2.8px;background:#5c5c5c"></i><span class="rl" style="left:672.35px;top:1.3px">120</span><i style="left:698.00px;top:0;width:1.2px;height:9.8px;background:#3d3d3d"></i><i style="left:712.17px;top:7px;width:1px;height:2.8px;background:#5c5c5c"></i><span class="rl" style="left:700.50px;top:1.3px">130</span><i style="left:726.14px;top:0;width:1.2px;height:9.8px;background:#3d3d3d"></i><i style="left:740.32px;top:7px;width:1px;height:2.8px;background:#5c5c5c"></i><span class="rl" style="left:728.64px;top:1.3px">140</span><i style="left:754.29px;top:0;width:1.2px;height:9.8px;background:#3d3d3d"></i><i style="left:768.46px;top:7px;width:1px;height:2.8px;background:#5c5c5c"></i><span class="rl" style="left:756.79px;top:1.3px">150</span><i style="left:782.44px;top:0;width:1.2px;height:9.8px;background:#3d3d3d"></i><i style="left:796.61px;top:7px;width:1px;height:2.8px;background:#5c5c5c"></i><span class="rl" style="left:784.94px;top:1.3px">160</span><i style="left:810.58px;top:0;width:1.2px;height:9.8px;background:#3d3d3d"></i><i style="left:824.75px;top:7px;width:1px;height:2.8px;background:#5c5c5c"></i><span class="rl" style="left:813.08px;top:1.3px">170</span><i style="left:838.73px;top:0;width:1.2px;height:9.8px;background:#3d3d3d"></i><i style="left:852.90px;top:7px;width:1px;height:2.8px;background:#5c5c5c"></i><span class="rl" style="left:841.23px;top:1.3px">180</span><i style="left:866.87px;top:0;width:1.2px;height:9.8px;background:#3d3d3d"></i><i style="left:881.05px;top:7px;width:1px;height:2.8px;background:#5c5c5c"></i><span class="rl" style="left:869.37px;top:1.3px">190</span><i style="left:895.02px;top:0;width:1.2px;height:9.8px;background:#3d3d3d"></i><i style="left:909.19px;top:7px;width:1px;height:2.8px;background:#5c5c5c"></i><span class="rl" style="left:897.52px;top:1.3px">200</span><i style="left:923.17px;top:0;width:1.2px;height:9.8px;background:#3d3d3d"></i><i style="left:937.34px;top:7px;width:1px;height:2.8px;background:#5c5c5c"></i><span class="rl" style="left:925.67px;top:1.3px">210</span><i style="left:951.31px;top:0;width:1.2px;height:9.8px;background:#3d3d3d"></i><i style="left:965.49px;top:7px;width:1px;height:2.8px;background:#5c5c5c"></i><span class="rl" style="left:953.81px;top:1.3px">220</span><i style="left:979.46px;top:0;width:1.2px;height:9.8px;background:#3d3d3d"></i><i style="left:993.63px;top:7px;width:1px;height:2.8px;background:#5c5c5c"></i><span class="rl" style="left:981.96px;top:1.3px">230</span><i style="left:1007.60px;top:0;width:1.2px;height:9.8px;background:#3d3d3d"></i><i style="left:1021.78px;top:7px;width:1px;height:2.8px;background:#5c5c5c"></i><span class="rl" style="left:1010.10px;top:1.3px">240</span><i style="left:1035.75px;top:0;width:1.2px;height:9.8px;background:#3d3d3d"></i><i style="left:1049.92px;top:7px;width:1px;height:2.8px;background:#5c5c5c"></i><span class="rl" style="left:1038.25px;top:1.3px">250</span><i style="left:1063.90px;top:0;width:1.2px;height:9.8px;background:#3d3d3d"></i><i style="left:1078.07px;top:7px;width:1px;height:2.8px;background:#5c5c5c"></i><span class="rl" style="left:1066.40px;top:1.3px">260</span>
<i style="left:0;top:0;width:10.4px;height:9.8px;background:#202020"></i><i style="left:10.3px;top:0;width:1.1px;height:11.6px;background:#6c6c6c"></i><i style="left:2.5px;top:0;width:1.2px;height:9.8px;background:#484848"></i><i style="left:0;top:2.3px;width:10.3px;height:1.2px;background:#484848"></i></div>
<div class="a" style="left:30px;top:119.6px;width:12px;height:618.4px;overflow:hidden">
<div style="left:0;top:0;width:10.3px;height:619px;background:#202020"></div><div style="left:10.3px;top:0;width:1.1px;height:619px;background:#6a6a6a"></div><div style="left:8.9px;top:0;width:1.4px;height:619px;background:repeating-linear-gradient(180deg,#4c4c4c 0,#4c4c4c 1px,transparent 1px,transparent 2.8146px);background-position:0 2.3415999999999944px"></div><i style="left:0;top:13.00px;width:10.3px;height:1.2px;background:#3d3d3d"></i><i style="left:7.5px;top:27.17px;width:2.8px;height:1px;background:#5c5c5c"></i><span class="rl" style="left:1.6px;top:14.50px">0</span><i style="left:0;top:41.15px;width:10.3px;height:1.2px;background:#3d3d3d"></i><i style="left:7.5px;top:55.32px;width:2.8px;height:1px;background:#5c5c5c"></i><span class="rl" style="left:1.6px;top:42.65px">1</span><span class="rl" style="left:1.6px;top:49.25px">0</span><i style="left:0;top:69.29px;width:10.3px;height:1.2px;background:#3d3d3d"></i><i style="left:7.5px;top:83.47px;width:2.8px;height:1px;background:#5c5c5c"></i><span class="rl" style="left:1.6px;top:70.79px">2</span><span class="rl" style="left:1.6px;top:77.39px">0</span><i style="left:0;top:97.44px;width:10.3px;height:1.2px;background:#3d3d3d"></i><i style="left:7.5px;top:111.61px;width:2.8px;height:1px;background:#5c5c5c"></i><span class="rl" style="left:1.6px;top:98.94px">3</span><span class="rl" style="left:1.6px;top:105.54px">0</span><i style="left:0;top:125.58px;width:10.3px;height:1.2px;background:#3d3d3d"></i><i style="left:7.5px;top:139.76px;width:2.8px;height:1px;background:#5c5c5c"></i><span class="rl" style="left:1.6px;top:127.08px">4</span><span class="rl" style="left:1.6px;top:133.68px">0</span><i style="left:0;top:153.73px;width:10.3px;height:1.2px;background:#3d3d3d"></i><i style="left:7.5px;top:167.90px;width:2.8px;height:1px;background:#5c5c5c"></i><span class="rl" style="left:1.6px;top:155.23px">5</span><span class="rl" style="left:1.6px;top:161.83px">0</span><i style="left:0;top:181.88px;width:10.3px;height:1.2px;background:#3d3d3d"></i><i style="left:7.5px;top:196.05px;width:2.8px;height:1px;background:#5c5c5c"></i><span class="rl" style="left:1.6px;top:183.38px">6</span><span class="rl" style="left:1.6px;top:189.98px">0</span><i style="left:0;top:210.02px;width:10.3px;height:1.2px;background:#3d3d3d"></i><i style="left:7.5px;top:224.19px;width:2.8px;height:1px;background:#5c5c5c"></i><span class="rl" style="left:1.6px;top:211.52px">7</span><span class="rl" style="left:1.6px;top:218.12px">0</span><i style="left:0;top:238.17px;width:10.3px;height:1.2px;background:#3d3d3d"></i><i style="left:7.5px;top:252.34px;width:2.8px;height:1px;background:#5c5c5c"></i><span class="rl" style="left:1.6px;top:239.67px">8</span><span class="rl" style="left:1.6px;top:246.27px">0</span><i style="left:0;top:266.31px;width:10.3px;height:1.2px;background:#3d3d3d"></i><i style="left:7.5px;top:280.49px;width:2.8px;height:1px;background:#5c5c5c"></i><span class="rl" style="left:1.6px;top:267.81px">9</span><span class="rl" style="left:1.6px;top:274.41px">0</span><i style="left:0;top:294.46px;width:10.3px;height:1.2px;background:#3d3d3d"></i><i style="left:7.5px;top:308.63px;width:2.8px;height:1px;background:#5c5c5c"></i><span class="rl" style="left:1.6px;top:295.96px">1</span><span class="rl" style="left:1.6px;top:302.56px">0</span><span class="rl" style="left:1.6px;top:309.16px">0</span><i style="left:0;top:322.61px;width:10.3px;height:1.2px;background:#3d3d3d"></i><i style="left:7.5px;top:336.78px;width:2.8px;height:1px;background:#5c5c5c"></i><span class="rl" style="left:1.6px;top:324.11px">1</span><span class="rl" style="left:1.6px;top:330.71px">1</span><span class="rl" style="left:1.6px;top:337.31px">0</span><i style="left:0;top:350.75px;width:10.3px;height:1.2px;background:#3d3d3d"></i><i style="left:7.5px;top:364.92px;width:2.8px;height:1px;background:#5c5c5c"></i><span class="rl" style="left:1.6px;top:352.25px">1</span><span class="rl" style="left:1.6px;top:358.85px">2</span><span class="rl" style="left:1.6px;top:365.45px">0</span><i style="left:0;top:378.90px;width:10.3px;height:1.2px;background:#3d3d3d"></i><i style="left:7.5px;top:393.07px;width:2.8px;height:1px;background:#5c5c5c"></i><span class="rl" style="left:1.6px;top:380.40px">1</span><span class="rl" style="left:1.6px;top:387.00px">3</span><span class="rl" style="left:1.6px;top:393.60px">0</span><i style="left:0;top:407.04px;width:10.3px;height:1.2px;background:#3d3d3d"></i><i style="left:7.5px;top:421.22px;width:2.8px;height:1px;background:#5c5c5c"></i><span class="rl" style="left:1.6px;top:408.54px">1</span><span class="rl" style="left:1.6px;top:415.14px">4</span><span class="rl" style="left:1.6px;top:421.74px">0</span><i style="left:0;top:435.19px;width:10.3px;height:1.2px;background:#3d3d3d"></i><i style="left:7.5px;top:449.36px;width:2.8px;height:1px;background:#5c5c5c"></i><span class="rl" style="left:1.6px;top:436.69px">1</span><span class="rl" style="left:1.6px;top:443.29px">5</span><span class="rl" style="left:1.6px;top:449.89px">0</span><i style="left:0;top:463.34px;width:10.3px;height:1.2px;background:#3d3d3d"></i><i style="left:7.5px;top:477.51px;width:2.8px;height:1px;background:#5c5c5c"></i><span class="rl" style="left:1.6px;top:464.84px">1</span><span class="rl" style="left:1.6px;top:471.44px">6</span><span class="rl" style="left:1.6px;top:478.04px">0</span><i style="left:0;top:491.48px;width:10.3px;height:1.2px;background:#3d3d3d"></i><i style="left:7.5px;top:505.65px;width:2.8px;height:1px;background:#5c5c5c"></i><span class="rl" style="left:1.6px;top:492.98px">1</span><span class="rl" style="left:1.6px;top:499.58px">7</span><span class="rl" style="left:1.6px;top:506.18px">0</span><i style="left:0;top:519.63px;width:10.3px;height:1.2px;background:#3d3d3d"></i><i style="left:7.5px;top:533.80px;width:2.8px;height:1px;background:#5c5c5c"></i><span class="rl" style="left:1.6px;top:521.13px">1</span><span class="rl" style="left:1.6px;top:527.73px">8</span><span class="rl" style="left:1.6px;top:534.33px">0</span><i style="left:0;top:547.77px;width:10.3px;height:1.2px;background:#3d3d3d"></i><i style="left:7.5px;top:561.95px;width:2.8px;height:1px;background:#5c5c5c"></i><span class="rl" style="left:1.6px;top:549.27px">1</span><span class="rl" style="left:1.6px;top:555.87px">9</span><span class="rl" style="left:1.6px;top:562.47px">0</span><i style="left:0;top:575.92px;width:10.3px;height:1.2px;background:#3d3d3d"></i><i style="left:7.5px;top:590.09px;width:2.8px;height:1px;background:#5c5c5c"></i><span class="rl" style="left:1.6px;top:577.42px">2</span><span class="rl" style="left:1.6px;top:584.02px">0</span><span class="rl" style="left:1.6px;top:590.62px">0</span><i style="left:0;top:604.07px;width:10.3px;height:1.2px;background:#3d3d3d"></i><i style="left:7.5px;top:618.24px;width:2.8px;height:1px;background:#5c5c5c"></i><span class="rl" style="left:1.6px;top:605.57px">2</span><span class="rl" style="left:1.6px;top:612.17px">1</span><span class="rl" style="left:1.6px;top:618.77px">0</span></div>
<div class="a" style="left:1102px;top:108px;width:13px;height:642px;background:#4b4b4b"></div><div class="a" style="left:1113px;top:87px;width:2px;height:663px;background:#454545"></div><div class="a" style="left:1103px;top:180px;width:10px;height:486px;border-radius:5px;background:#6b6b6b"></div>
<div class="a" style="left:30px;top:738px;width:395px;height:11px;background:#535353"></div><div class="a" style="left:425px;top:738px;width:677px;height:11px;background:#4b4b4b"></div><div class="a" style="left:480px;top:739px;width:552px;height:9.5px;border-radius:5px;background:#6b6b6b"></div><div class="a" style="left:0;top:749px;width:1200px;height:1px;background:#3c3c3c"></div>
<div class="a" style="left:40px;top:739.5px;font-size:7.2px;line-height:9px;color:#e6e6e6;white-space:nowrap;letter-spacing:-0.15px">77.58%</div><svg class="a" style="left:70px;top:742.5px" width="6" height="3.4" viewBox="0 0 6 3.4"><path d="M0.5 0.5 L3.0 2.9 L5.5 0.5" fill="none" stroke="#dcdcdc" stroke-width="1.1"/></svg><svg class="a" style="left:85px;top:740.5px" width="7" height="7" viewBox="0 0 7 7"><path d="M0.5 0.3V6.7" stroke="#7e7e7e" stroke-width="1.1"/><path d="M6.3 0.3 L2 3.5 L6.3 6.7z" fill="#7e7e7e"/></svg><svg class="a" style="left:100.5px;top:740.5px" width="5" height="7" viewBox="0 0 5 7"><path d="M4.6 0.3 L0.3 3.5 L4.6 6.7z" fill="#7e7e7e"/></svg><div class="a" style="left:113.5px;top:738px;width:64px;height:11.5px;background:#3e3e3e;border:1px solid #767676;border-radius:2px"></div><div class="a" style="left:164.5px;top:739px;width:1px;height:9.5px;background:#767676"></div><div class="a" style="left:117px;top:739.5px;font-size:7.6px;line-height:9px;color:#f0f0f0">1</div><svg class="a" style="left:168px;top:742.3px" width="6" height="3.4" viewBox="0 0 6 3.4"><path d="M0.5 0.5 L3.0 2.9 L5.5 0.5" fill="none" stroke="#f0f0f0" stroke-width="1.2"/></svg><svg class="a" style="left:186.5px;top:740.5px" width="5" height="7" viewBox="0 0 5 7"><path d="M0.4 0.3 L4.7 3.5 L0.4 6.7z" fill="#7e7e7e"/></svg><svg class="a" style="left:200px;top:740.5px" width="7" height="7" viewBox="0 0 7 7"><path d="M6.5 0.3V6.7" stroke="#7e7e7e" stroke-width="1.1"/><path d="M0.7 0.3 L5 3.5 L0.7 6.7z" fill="#7e7e7e"/></svg><svg class="a" style="left:218px;top:738.6px" width="13" height="10" viewBox="0 0 13 10"><path d="M3.1 8.5 A4.1 4.1 0 1 1 7.3 8.5" fill="none" stroke="#d0d0d0" stroke-width="1.5"/><rect x="4" y="3.3" width="2.7" height="5.4" fill="#3c3c3c"/><path d="M5.4 3.3 H6.7 V4.7 H5.4z" fill="#cfcfcf"/><path d="M10.3 7.5 h2.2 l-1.1 1.5z" fill="#c8c8c8"/></svg><div class="a" style="left:241px;top:739.5px;font-size:7px;line-height:9px;color:#e6e6e6;white-space:nowrap;letter-spacing:-0.1px">[基本] (作業用)</div><svg class="a" style="left:314.7px;top:742.2px" width="5.6" height="3.2" viewBox="0 0 5.6 3.2"><path d="M0.5 0.5 L2.8 2.7 L5.1 0.5" fill="none" stroke="#f0f0f0" stroke-width="1.3"/></svg><div class="a" style="left:330.7px;top:738.9px;width:9.3px;height:9.3px;border-radius:50%;background:#4a7d53"></div><div class="a" style="left:343.5px;top:739px;font-size:8.2px;letter-spacing:.25px;line-height:10px;color:#ececec;white-space:nowrap;font-weight:bold">エラーなし</div><svg class="a" style="left:416px;top:742.5px" width="5.5" height="3.2" viewBox="0 0 5.5 3.2"><path d="M0.5 0.5 L2.75 2.7 L5.0 0.5" fill="none" stroke="#b0b0b0" stroke-width="1.1"/></svg><svg class="a" style="left:1089px;top:740px" width="12" height="8.4" viewBox="0 0 12 8.4"><rect x="0.5" y="0.5" width="10.8" height="7.4" rx="0.8" fill="#3a3a3a" stroke="#ececec" stroke-width="1"/><path d="M5.9 0.6 V7.8" stroke="#ececec" stroke-width="1.5"/></svg><svg class="a" style="left:1103px;top:739px" width="10" height="10" viewBox="0 0 10 10"><path d="M9.5 1 V9.5 H1z" fill="#5a5a5a"/></svg>
<div class="a" style="left:0;top:87px;width:30px;height:663px;background:#404040"></div><div class="a" style="left:1px;top:87px;width:28px;height:9px;background:#484848"></div><div class="a" style="left:1px;top:96px;width:28px;height:654px;background:#535353"></div><svg class="a" style="left:3.6px;top:89.2px" width="5.4" height="4.4" viewBox="0 0 5.4 4.4"><path d="M0.4 0.4 L2.2 2.2 L0.4 4 M3.2 0.4 L5 2.2 L3.2 4" fill="none" stroke="#8c8c8c" stroke-width="0.9"/></svg><div class="a" style="left:7px;top:98px;width:14px;height:2.4px;background:#3f3f3f;border-radius:1px"></div>
<svg class="a" style="left:0;top:0" width="30" height="750" viewBox="0 0 30 750">
<defs><linearGradient id="gsw" x1="0" x2="1" y1="0" y2="0"><stop offset="0" stop-color="#b0b0b0"/><stop offset="1" stop-color="#2e2e2e"/></linearGradient><pattern id="chk" x="9.3" y="388.7" width="3.4" height="3.4" patternUnits="userSpaceOnUse"><rect width="3.4" height="3.4" fill="#8a8a8a"/><rect width="1.7" height="1.7" fill="#303030"/><rect x="1.7" y="1.7" width="1.7" height="1.7" fill="#303030"/></pattern><linearGradient id="gfe" x1="0" x2="0" y1="0" y2="1"><stop offset="0" stop-color="#535353" stop-opacity="0"/><stop offset="1" stop-color="#2a2a2a" stop-opacity="0.9"/></linearGradient></defs>
<path d="M1 192.5 H29" stroke="#4a4a4a" stroke-width="1"/>
<path d="M1 331 H29" stroke="#4a4a4a" stroke-width="1"/>
<path d="M1 402.5 H29" stroke="#4a4a4a" stroke-width="1"/>
<path d="M1 473 H29" stroke="#4a4a4a" stroke-width="1"/>
<path d="M11 109.8 V119.4 L13.5 116.9 L18 116.5 Z" fill="none" stroke="#c6c6c6" stroke-width="1" stroke-linejoin="miter"/>
<path d="M10.4 126.2 V137.8 L13.7 134.6 L19.2 134.2 Z" fill="#cacaca"/>
<path d="M16 152.6 H10.6 V143.9 H15 L17.8 146.7 V148 M15 143.9 V146.7 H17.8" fill="none" stroke="#c6c6c6" stroke-width="1"/>
<path d="M16.3 147.6 V154.2 L18 152.5 L20.6 152.3 Z" fill="#cacaca"/>
<path d="M8.6 160.7 V171 M20 160.7 V171" stroke="#c6c6c6" stroke-width="1.3" fill="none"/>
<path d="M11 165.9 H17.6 M12.9 163.8 L10.7 165.9 L12.9 168 M15.7 163.8 L17.9 165.9 L15.7 168" stroke="#c6c6c6" stroke-width="1" fill="none"/>
<path d="M9.6 181.6 V188.2 H19 V181.6" stroke="#c6c6c6" stroke-width="1.3" fill="none"/>
<path d="M11.6 184.4 H17.4 M11.6 186.3 H17.4" stroke="#c6c6c6" stroke-width="1" stroke-dasharray="1 1" fill="none"/>
<path d="M11.4 177.6 L14.2 180.6 M14.6 178.2 V181 H11.9" stroke="#c6c6c6" stroke-width="1" fill="none"/>
<path d="M23.2 187.29999999999998 V189.6 H20.9 Z" fill="#d0d0d0"/>
<rect x="4.5" y="194.5" width="19.5" height="15.5" rx="2" fill="#2c2c2c"/>
<text x="14" y="207.4" font-family="Liberation Serif,serif" font-weight="bold" font-size="14.6" text-anchor="middle" fill="#ececec">T</text>
<path d="M23.2 207.1 V209.4 H20.9 Z" fill="#d0d0d0"/>
<path d="M9 224.6 L19.6 214.4" stroke="#c6c6c6" stroke-width="1.2" fill="none"/>
<path d="M8.5 241.7 L10 236.2 Q11 233.6 14.8 232.8 L17.3 235.3 Q16.6 239 13.9 240.1 Z" fill="#c6c6c6"/>
<path d="M8.9 241.3 L12.6 237.6" stroke="#535353" stroke-width="0.8"/><circle cx="13" cy="237.2" r="0.9" fill="#535353"/>
<path d="M15.7 231.9 L17.5 230.1 L20 232.6 L18.2 234.4 Z" fill="#c6c6c6"/>
<path d="M23.2 240.89999999999998 V243.2 H20.9 Z" fill="#d0d0d0"/>
<path d="M11.2 253.3 L16.2 248.3 L19.3 251.4 L14.3 256.4 Z M16.9 247.7 L17.8 246.8 Q18.4 246.3 19 246.9 L20.8 248.7 Q21.3 249.3 20.8 249.8 L19.9 250.7 Z" fill="#c6c6c6" transform="translate(-0.7 1.3)"/>
<path d="M9.9 255.3 L13 258.4 L8.4 259.8 Z" fill="#c6c6c6"/>
<path d="M23.2 258.0 V260.3 H20.9 Z" fill="#d0d0d0"/>
<path d="M8.9 266.3 H19.7 V276 H8.9 Z M8.9 266.3 L19.7 276 M19.7 266.3 L8.9 276" stroke="#c6c6c6" stroke-width="1" fill="none"/>
<path d="M23.2 275.3 V277.6 H20.9 Z" fill="#d0d0d0"/>
<rect x="8.9" y="283.4" width="10.8" height="9.7" fill="#6b6b6b" stroke="#c6c6c6" stroke-width="1"/>
<path d="M23.2 292.3 V294.6 H20.9 Z" fill="#d0d0d0"/>
<path d="M9.2 300.3 V310.4" stroke="#c6c6c6" stroke-width="1.5"/><path d="M9 300.9 H20.2 M9 305.4 H20.2 M9 309.9 H20.2" stroke="#c6c6c6" stroke-width="1"/>
<path d="M11.2 303.1 H20.4 M11.2 307.6 H20.4" stroke="#c6c6c6" stroke-width="2.2" stroke-dasharray="2.3 0.8"/>
<path d="M8.6 317.2 H20.2" stroke="#c6c6c6" stroke-width="1.6"/><path d="M9.8 317 V328 M14.4 317 V328 M15.6 317 V328 M20 317 V328" stroke="#c6c6c6" stroke-width="0.9"/>
<path d="M12.1 318.8 V328 M17.8 318.8 V328" stroke="#c6c6c6" stroke-width="2.4" stroke-dasharray="2.3 0.8"/>
<circle cx="18.7" cy="338" r="1.7" fill="none" stroke="#c6c6c6" stroke-width="1"/><circle cx="18.7" cy="344.7" r="1.7" fill="none" stroke="#c6c6c6" stroke-width="1"/>
<path d="M17.3 339.2 L8.8 345.7 M17.3 343.5 L8.8 337" stroke="#c6c6c6" stroke-width="1.3" fill="none"/>
<rect x="12.2" y="354.5" width="8.6" height="8.8" fill="none" stroke="#c6c6c6" stroke-width="1" stroke-dasharray="1.3 1"/>
<path d="M8.2 353.4 V362.6 L10.7 360.2 L14 359.8 Z" fill="#cacaca"/>
<path d="M23.6 362.3 V364.6 H21.3 Z" fill="#d0d0d0"/>
<rect x="8.9" y="370.9" width="10.8" height="9.5" fill="url(#gsw)" stroke="#c6c6c6" stroke-width="1"/>
<rect x="8.9" y="388.3" width="10.8" height="9.5" fill="url(#chk)" stroke="#c6c6c6" stroke-width="1"/><rect x="9.4" y="388.8" width="9.8" height="8.5" fill="url(#gfe)"/>
<path d="M9.3 407.2 H19.5 V414.6 L16.6 417.5 H9.3 Z" fill="#c6c6c6"/>
<path d="M11 409.6 H17.8 M11 411.8 H17.8 M11 414 H14.6" stroke="#4a4a4a" stroke-width="0.9"/><path d="M16.4 417.2 V414.4 H19.2" stroke="#4a4a4a" stroke-width="0.8" fill="none"/>
<path d="M9 435.6 L9.6 433.2 L15 427.8 L16.7 429.5 L11.3 434.9 Z" fill="none" stroke="#c6c6c6" stroke-width="0.9"/>
<path d="M14.2 427 L15.3 425.9 L15.9 426.5 L17.4 424.4 Q18.6 423.2 19.8 424.4 Q20.8 425.6 19.7 426.8 L17.8 428.6 L18.4 429.2 L17.3 430.3 Z" fill="#c6c6c6"/>
<rect x="14.6" y="432.4" width="6.4" height="2.9" fill="none" stroke="#c6c6c6" stroke-width="0.9"/>
<path d="M23.6 434.5 V436.8 H21.3 Z" fill="#d0d0d0"/>
<path d="M12.2 452.2 Q11 450.6 9.2 447.6 Q8.7 446.5 9.6 446.2 Q10.5 446 11.2 447.1 L12 448.3 L11.5 443.4 Q11.4 442.5 12.1 442.4 Q12.9 442.3 13.1 443.2 L13.7 446.6 L13.8 442 Q13.8 441.2 14.6 441.2 Q15.4 441.2 15.4 442 L15.5 446.6 L16.3 442.8 Q16.5 442 17.2 442.1 Q18 442.3 17.9 443.1 L17.4 447.1 L18.7 444.7 Q19.1 444 19.8 444.3 Q20.4 444.7 20.1 445.4 L18.4 449.6 Q17.8 451.3 17 452.2 Z" fill="#c6c6c6"/>
<circle cx="13.1" cy="461.6" r="4" fill="none" stroke="#c6c6c6" stroke-width="1.2"/><path d="M16.1 464.7 L19.6 468.5" stroke="#c6c6c6" stroke-width="1.5" stroke-linecap="round"/>
<rect x="3.4" y="475.4" width="9.2" height="8.8" rx="1.6" fill="#1c1c1c"/><rect x="4.4" y="476.4" width="5" height="4.8" fill="#efefef"/><circle cx="6.7" cy="478.6" r="0.9" fill="#e8a33a"/><rect x="7.4" y="479.2" width="4.2" height="4" fill="#111" stroke="#e6e6e6" stroke-width="0.8"/>
<path d="M18.6 479.2 Q22.6 479 22.9 482.6" fill="none" stroke="#c6c6c6" stroke-width="1.3"/><path d="M19.4 477.2 L16.8 479.5 L19.8 481.4 Z M20.8 482 L25 482 L22.9 485.2 Z" fill="#c6c6c6"/>
<svg x="4" y="488.5" width="14" height="13.6" viewBox="0 0 14 13.6"><rect width="14" height="13.6" fill="#fff"/><path d="M0 13.6 L14 0" stroke="#f21b1b" stroke-width="1.7"/></svg>
<rect x="10.5" y="494.6" width="15" height="15" fill="#535353"/>
<svg x="11" y="495.1" width="14" height="14" viewBox="0 0 14 14"><rect width="14" height="14" fill="#fff"/><rect x="3.3" y="3.3" width="7.4" height="7.4" fill="#3a3a3a"/><path d="M0 14 L14 0" stroke="#f21b1b" stroke-width="1.7"/></svg>
<rect x="4.8" y="513.8" width="9" height="10" rx="2" fill="#343434"/><path d="M6.8 516.3 H12 V521.8 H6.8 Z M6.8 518.1 H12 M6.8 520 H12 M8.6 516.3 V521.8 M10.3 516.3 V521.8" fill="none" stroke="#9c9c9c" stroke-width="0.7"/>
<text x="21" y="522.4" font-family="Liberation Serif,serif" font-weight="bold" font-size="9.6" text-anchor="middle" fill="#bdbdbd">T</text>
<rect x="4.5" y="528.5" width="19.5" height="15" rx="2" fill="#303030"/>
<svg x="8.5" y="531" width="11" height="9.6" viewBox="0 0 11 9.6"><rect width="11" height="9.6" fill="#fff"/><path d="M0 9.6 L11 0" stroke="#f21b1b" stroke-width="1.4"/></svg>
<path d="M23.2 540.7 V543 H20.9 Z" fill="#d0d0d0"/>
<path d="M12 552.6 H19.4" stroke="#b0b0b0" stroke-width="1.3" stroke-dasharray="1.2 0.9"/><rect x="11.9" y="554.6" width="7.6" height="5.2" fill="#bdbdbd"/><path d="M11.9 556.3 H19.5 M11.9 558.1 H19.5" stroke="#6a6a6a" stroke-width="0.6"/><path d="M10.5 554.8 V559.6" stroke="#b0b0b0" stroke-width="1.2" stroke-dasharray="1.2 0.9"/>
<rect x="4.5" y="569.5" width="19.5" height="15.5" rx="2" fill="#303030"/><rect x="10.6" y="573.1" width="8.4" height="8.4" fill="#8c8c8c" stroke="#c4c4c4" stroke-width="0.9"/><rect x="12.7" y="575.2" width="4.2" height="4.2" fill="#4a4a4a" stroke="#b0b0b0" stroke-width="0.5"/>
<path d="M23.2 582.3000000000001 V584.6 H20.9 Z" fill="#d0d0d0"/>
</svg>
<div class="a" style="left:1115px;top:87px;width:85px;height:9px;background:#454545"></div><svg class="a" style="left:1190px;top:89px" width="5.4" height="4.4" viewBox="0 0 5.4 4.4"><path d="M2.2 0.4 L0.4 2.2 L2.2 4 M5 0.4 L3.2 2.2 L5 4" fill="none" stroke="#9a9a9a" stroke-width="0.9"/></svg><div class="a" style="left:1115px;top:96px;width:85px;height:654px;background:#535353">
<div class="ps" style="top:67.5px;height:1.4px"></div>
<div class="ps" style="top:117.0px;height:1.4px"></div>
<div class="ps" style="top:146.3px;height:1.4px"></div>
<div class="ps" style="top:195.3px;height:1.4px"></div>
<div class="ps" style="top:244.3px;height:1.4px"></div>
<div class="ps" style="top:274.1px;height:1.4px"></div>
<div class="ps" style="top:323.8px;height:1.4px"></div>
<div class="ps" style="top:353.3px;height:1.4px"></div>
<div class="ps" style="top:381.6px;height:1.4px"></div>
<div class="pg" style="top:2px"></div>
<div class="pg" style="top:71px"></div>
<div class="pg" style="top:120px"></div>
<div class="pg" style="top:149px"></div>
<div class="pg" style="top:198px"></div>
<div class="pg" style="top:247px"></div>
<div class="pg" style="top:277px"></div>
<div class="pg" style="top:327px"></div>
<div class="pg" style="top:356px"></div>
<div class="pl" style="top:11.1px">ページ</div>
<div class="pl" style="top:31.2px">レイヤー</div>
<div class="pl" style="top:51.1px">リンク</div>
<div class="pl" style="top:80.8px">線</div>
<div class="pl" style="top:100.8px">カラー</div>
<div class="pl" style="top:130.3px">スウォッチ</div>
<div class="pl" style="top:159.8px">文字</div>
<div class="pl" style="top:179.8px">段落</div>
<div class="pl" style="top:209.2px">文字スタイ...</div>
<div class="pl" style="top:229.1px">段落スタイ...</div>
<div class="pl" style="top:257.5px">グリッドフ...</div>
<div class="pl" style="top:287.0px">整列</div>
<div class="pl" style="top:307.0px">パスファイ...</div>
<div class="pl" style="top:336.6px">テキストの...</div>
<div class="pl" style="top:366.2px">効果</div>
<svg style="left:0;top:0" width="85" height="654" viewBox="1115 96 85 654"><path d="M1122.6 117.3 V111.2 Q1122.6 107.9 1126 107.7 H1128.1 V117.3 Z M1135.4 117.3 V111.2 Q1135.4 107.9 1132 107.7 H1129.9 V117.3 Z" fill="#c4c4c4"/><path d="M1129 105.8 V119" stroke="#c4c4c4" stroke-width="0.9"/><path d="M1125.6 109.6 V111.4 H1124 M1132.4 109.6 V111.4 H1134" stroke="#6a6a6a" stroke-width="0.7" fill="none"/><path d="M1128.8 126.3 L1135.3 130.3 L1128.8 134.3 L1122.3 130.3 Z" fill="#c4c4c4"/><path d="M1122.3 133.3 L1123.9 132.4 L1128.8 135.4 L1133.7 132.4 L1135.3 133.3 L1128.8 137.3 Z" fill="#c4c4c4" transform="translate(0 1.2)"/><rect x="1122.6" y="149.4" width="7.9" height="5.8" rx="2.9" fill="none" stroke="#c4c4c4" stroke-width="1.5"/><rect x="1127.9" y="149.4" width="7.9" height="5.8" rx="2.9" fill="none" stroke="#c4c4c4" stroke-width="1.5"/><path d="M1122.7 177.3 H1135" stroke="#c4c4c4" stroke-width="0.8"/><path d="M1122.7 180.7 H1135" stroke="#c4c4c4" stroke-width="1.4"/><path d="M1122.7 184.8 H1135" stroke="#c4c4c4" stroke-width="2.3"/><path d="M1128 196.8 Q1131.5 195.4 1132.6 197.6 Q1136.2 199 1135.8 202 Q1135 206.4 1128.6 206.4 Q1122.2 206.4 1122.2 202.2 Q1122.4 198.2 1128 196.8 Z" fill="none" stroke="#c4c4c4" stroke-width="1.3"/><circle cx="1125.6" cy="202.6" r="1" fill="#c4c4c4"/><circle cx="1128.4" cy="204" r="1" fill="#c4c4c4"/><circle cx="1131.4" cy="203.6" r="1" fill="#c4c4c4"/><circle cx="1132.8" cy="200.8" r="1" fill="#c4c4c4"/><circle cx="1129.4" cy="199.6" r="1.5" fill="#c4c4c4"/><rect x="1122.9" y="227.7" width="11.6" height="7.2" fill="none" stroke="#c4c4c4" stroke-width="0.9"/><path d="M1126.8 227.7 V234.9 M1130.7 227.7 V234.9 M1122.9 231.2 H1134.5" stroke="#c4c4c4" stroke-width="0.8"/><path d="M1123.4 228.2 H1134 V231 H1123.4Z" fill="#c4c4c4" opacity="0.75"/><rect x="1122.5" y="353.2" width="13.2" height="4.8" fill="none" stroke="#c4c4c4" stroke-width="0.9"/><rect x="1123.6" y="354.3" width="3" height="2.6" fill="#c4c4c4" opacity="0.8"/><rect x="1127.7" y="354.3" width="3" height="2.6" fill="#c4c4c4" opacity="0.8"/><rect x="1131.8" y="354.3" width="3" height="2.6" fill="#c4c4c4" opacity="0.8"/><rect x="1122.5" y="359.4" width="13.2" height="4.8" fill="none" stroke="#c4c4c4" stroke-width="0.9"/><rect x="1123.6" y="360.5" width="3" height="2.6" fill="#c4c4c4" opacity="0.8"/><rect x="1127.7" y="360.5" width="3" height="2.6" fill="#c4c4c4" opacity="0.8"/><rect x="1131.8" y="360.5" width="3" height="2.6" fill="#c4c4c4" opacity="0.8"/><path d="M1123.5 382 V394.6" stroke="#c4c4c4" stroke-width="1.1"/><rect x="1125.4" y="383.6" width="5.2" height="4" fill="#c4c4c4"/><rect x="1125.4" y="389.1" width="9.2" height="4" fill="#c4c4c4"/><rect x="1123.4" y="403" width="6.8" height="6.6" fill="#c4c4c4"/><rect x="1127.2" y="406.2" width="7.2" height="7.2" fill="#c4c4c4" stroke="#535353" stroke-width="0.9"/><rect x="1127.7" y="406.7" width="2.4" height="2.8" fill="#7a7a7a"/><path d="M1123 433 H1135 M1123 435.5 H1135 M1123 438 H1135 M1123 440.5 H1135 M1123 443 H1135" stroke="#c4c4c4" stroke-width="0.9"/><circle cx="1129" cy="438" r="4" fill="#535353"/><circle cx="1129" cy="438" r="2.8" fill="#c4c4c4"/></svg>
<div style="left:8.3px;top:157.8px;font-size:12px;line-height:13px;color:#b8b8b8">字</div>
<div style="left:8.3px;top:178px;font-size:12px;line-height:13px;color:#b8b8b8">段</div>
<div style="left:11.5px;top:206.2px;font-size:9px;line-height:10px;color:#c0c0c0">字</div>
<div style="left:12.5px;top:226.4px;font-size:9px;line-height:10px;color:#c0c0c0">段</div>
<div style="left:7.6px;top:213.5px;width:5px;height:5px;border:1px solid #c4c4c4;background:#535353"></div><div style="left:10px;top:215.7px;width:5px;height:5px;border:1px solid #c4c4c4;background:#535353"></div>
<div style="left:7.6px;top:233.5px;width:5px;height:5px;border:1px solid #c4c4c4;background:#535353"></div><div style="left:10px;top:235.7px;width:5px;height:5px;border:1px solid #c4c4c4;background:#535353"></div>
<div style="left:8.6px;top:365px;font-family:'Liberation Serif',serif;font-style:italic;font-size:12.5px;line-height:13px;color:#c4c4c4;letter-spacing:-0.6px">fx</div>
</div>
</div>
</body></html>
